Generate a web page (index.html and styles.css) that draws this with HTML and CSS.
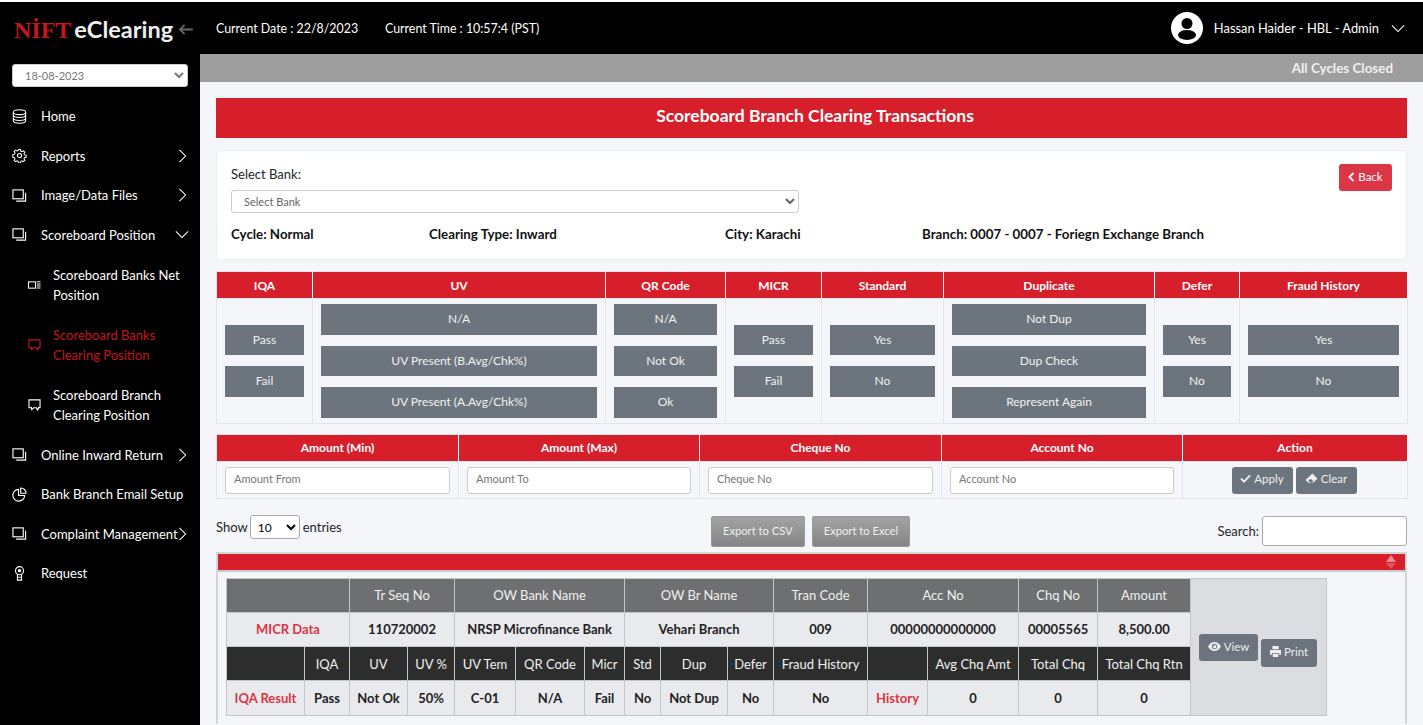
FILE: index.html
```html
<!DOCTYPE html>
<html lang="en">
<head>
  <meta charset="UTF-8" />
  <meta name="viewport" content="width=device-width, initial-scale=1.0"/>
  <title>NIFT eClearing</title>
  <link rel="stylesheet" href="styles.css">
</head>
<body>
  <svg class="sprite" aria-hidden="true">
    <symbol id="i-db" viewBox="0 0 16 16"><g fill="none" stroke="currentColor" stroke-width="1.1"><ellipse cx="8" cy="3.4" rx="6.6" ry="2.6"/><path d="M1.4 3.4v9.2c0 1.5 3 2.6 6.6 2.6s6.6-1.1 6.6-2.6V3.4M1.4 6.5c0 1.5 3 2.6 6.6 2.6s6.6-1.1 6.6-2.6M1.4 9.6c0 1.5 3 2.6 6.6 2.6s6.6-1.1 6.6-2.6"/></g></symbol>
    <symbol id="i-gear" viewBox="0 0 16 16"><g fill="none" stroke="currentColor" stroke-width="1.2"><circle cx="8" cy="8" r="2.2"/><path d="M6.8 1h2.4l.4 2 1.4.6 1.7-1.1 1.7 1.7-1.1 1.7.6 1.4 2 .4v2.4l-2 .4-.6 1.4 1.1 1.7-1.7 1.7-1.7-1.1-1.4.6-.4 2H6.8l-.4-2-1.4-.6-1.7 1.1-1.7-1.7 1.1-1.7-.6-1.4-2-.4V6.800l2-.4.6-1.4-1.1-1.7 1.7-1.7 1.7 1.1 1.4-.6z" transform="translate(.8 .8) scale(.9)"/></g></symbol>
    <symbol id="i-screens" viewBox="0 0 16 16"><g fill="none" stroke="currentColor" stroke-width="1.2"><rect x="1" y="2" width="11" height="9.5"/><path d="M14.5 5v9H4.5"/></g></symbol>
    <symbol id="i-list" viewBox="0 0 14 10"><g fill="none" stroke="currentColor" stroke-width="1.1"><rect x=".6" y="1.6" width="7.5" height="6.8"/><path d="M9.5 1.6h4M9.5 3.8h4M9.5 6h4M9.5 8.2h4"/></g></symbol>
    <symbol id="i-chat" viewBox="0 0 14 13"><g fill="none" stroke="currentColor" stroke-width="1.2"><path d="M3.5 9.5H1V1h12v8.500h-2"/><path d="M3.5 8.500l.5 3 2-2h3l1.500 2.500 1-3.500"/></g></symbol>
    <symbol id="i-pie" viewBox="0 0 16 16"><g fill="none" stroke="currentColor" stroke-width="1.2"><path d="M7 2.500a6.300 6.300 0 1 0 6.500 6.500H7z"/><path d="M9.300 1v5.700H15A5.700 5.700 0 0 0 9.300 1z"/></g></symbol>
    <symbol id="i-award" viewBox="0 0 12 16"><g fill="none" stroke="currentColor" stroke-width="1.2"><circle cx="6" cy="5" r="4.300"/><path d="M3.800 9v6h4.400V9M3.800 12h4.400"/></g><circle cx="6" cy="5" r="1.900" fill="currentColor"/></symbol>
    <symbol id="i-right" viewBox="0 0 10 16"><path d="M1.500 1l7 7-7 7" fill="none" stroke="currentColor" stroke-width="1.2"/></symbol>
    <symbol id="i-down" viewBox="0 0 16 10"><path d="M1 1.500l7 7 7-7" fill="none" stroke="currentColor" stroke-width="1.2"/></symbol>
    <symbol id="i-left" viewBox="0 0 8 12"><path d="M6.500 1L1.500 6l5 5" fill="none" stroke="currentColor" stroke-width="2.2"/></symbol>
    <symbol id="i-arrow" viewBox="0 0 16 12"><path d="M16 6H2M7 1L2 6l5 5" fill="none" stroke="currentColor" stroke-width="2"/></symbol>
    <symbol id="i-check" viewBox="0 0 12 10"><path d="M1 5l3.500 3.500L11 1.500" fill="none" stroke="currentColor" stroke-width="2"/></symbol>
    <symbol id="i-eraser" viewBox="0 0 14 12"><path d="M8 .5L13.500 6 8.500 11H4L.5 7.500z" fill="currentColor"/><path d="M3.500 7.500l3-1 2.500 2.500-1 1.500H5z" fill="#6c757d"/></symbol>
    <symbol id="i-eye" viewBox="0 0 16 11"><path d="M8 0C4.500 0 1.500 2.200 0 5.500 1.500 8.800 4.500 11 8 11s6.500-2.200 8-5.500C14.500 2.200 11.500 0 8 0z" fill="currentColor"/><circle cx="8" cy="5.500" r="3.300" fill="#6c757d"/><path d="M8 3.200a2.300 2.300 0 1 1-2.200 1.700 1.200 1.200 0 0 0 1.700-1.600z" fill="currentColor"/></symbol>
    <symbol id="i-print" viewBox="0 0 14 14"><path d="M3 0h8v4H3zM0 5h14v6h-2.500V9h-9v2H0zM3.500 10h7v4h-7z" fill="currentColor"/></symbol>
    <symbol id="i-user" viewBox="0 0 32 32"><circle cx="16" cy="16" r="16" fill="#fff"/><circle cx="16" cy="11.500" r="5.500" fill="#000"/><ellipse cx="16" cy="23" rx="9" ry="5" fill="#000"/></symbol>
  </svg>

  <div class="topbar">
    <div class="brand">
      <span class="brand-nift">NİFT</span><span class="brand-name">eClearing</span>
      <svg class="brand-back"><use href="#i-arrow"/></svg>
    </div>
    <div class="top-date">Current Date : 22/8/2023</div>
    <div class="top-time">Current Time : 10:57:4 (PST)</div>
    <div class="top-user">
      <svg class="avatar"><use href="#i-user"/></svg>
      <span>Hassan Haider - HBL - Admin</span>
      <svg class="top-caret"><use href="#i-down"/></svg>
    </div>
  </div>

  <div class="shell">
    <nav class="sidebar">
      <select class="date-select"><option>18-08-2023</option></select>
      <ul class="menu">
        <li class="menu-item"><svg class="menu-icon"><use href="#i-db"/></svg><span>Home</span></li>
        <li class="menu-item"><svg class="menu-icon"><use href="#i-gear"/></svg><span>Reports</span><svg class="menu-arrow"><use href="#i-right"/></svg></li>
        <li class="menu-item"><svg class="menu-icon"><use href="#i-screens"/></svg><span>Image/Data Files</span><svg class="menu-arrow"><use href="#i-right"/></svg></li>
        <li class="menu-item"><svg class="menu-icon"><use href="#i-screens"/></svg><span>Scoreboard Position</span><svg class="menu-arrow-down"><use href="#i-down"/></svg></li>
        <li class="sub-item"><svg class="sub-icon"><use href="#i-list"/></svg><span>Scoreboard Banks Net Position</span></li>
        <li class="sub-item active"><svg class="sub-icon"><use href="#i-chat"/></svg><span>Scoreboard Banks Clearing Position</span></li>
        <li class="sub-item"><svg class="sub-icon"><use href="#i-chat"/></svg><span>Scoreboard Branch Clearing Position</span></li>
        <li class="menu-item"><svg class="menu-icon"><use href="#i-screens"/></svg><span>Online Inward Return</span><svg class="menu-arrow"><use href="#i-right"/></svg></li>
        <li class="menu-item"><svg class="menu-icon"><use href="#i-pie"/></svg><span>Bank Branch Email Setup</span></li>
        <li class="menu-item"><svg class="menu-icon"><use href="#i-screens"/></svg><span>Complaint Management</span><svg class="menu-arrow"><use href="#i-right"/></svg></li>
        <li class="menu-item"><svg class="menu-icon"><use href="#i-award"/></svg><span>Request</span></li>
      </ul>
    </nav>

    <main class="main">
      <div class="status-bar">All Cycles Closed</div>
      <div class="content">
        <h1 class="page-title">Scoreboard Branch Clearing Transactions</h1>

        <div class="card">
          <div class="bank-row">
            <div class="bank-field">
              <label class="bank-label">Select Bank:</label>
              <select class="bank-select"><option>Select Bank</option></select>
            </div>
            <button class="btn-back"><svg class="ico-back"><use href="#i-left"/></svg>Back</button>
          </div>
          <div class="info-row">
            <span>Cycle: Normal</span>
            <span>Clearing Type: Inward</span>
            <span>City: Karachi</span>
            <span>Branch: 0007 - 0007 - Foriegn Exchange Branch</span>
          </div>
        </div>

        <table class="filter-table">
          <colgroup><col class="c-iqa"><col class="c-uv"><col class="c-qr"><col class="c-micr"><col class="c-std"><col class="c-dup"><col class="c-defer"><col class="c-fraud"></colgroup>
          <thead>
            <tr><th>IQA</th><th>UV</th><th>QR Code</th><th>MICR</th><th>Standard</th><th>Duplicate</th><th>Defer</th><th>Fraud History</th></tr>
          </thead>
          <tbody>
            <tr>
              <td><div class="stack"><span class="chip">Pass</span><span class="chip">Fail</span></div></td>
              <td><div class="stack"><span class="chip">N/A</span><span class="chip">UV Present (B.Avg/Chk%)</span><span class="chip">UV Present (A.Avg/Chk%)</span></div></td>
              <td><div class="stack"><span class="chip">N/A</span><span class="chip">Not Ok</span><span class="chip">Ok</span></div></td>
              <td><div class="stack"><span class="chip">Pass</span><span class="chip">Fail</span></div></td>
              <td><div class="stack"><span class="chip">Yes</span><span class="chip">No</span></div></td>
              <td><div class="stack"><span class="chip">Not Dup</span><span class="chip">Dup Check</span><span class="chip">Represent Again</span></div></td>
              <td><div class="stack"><span class="chip">Yes</span><span class="chip">No</span></div></td>
              <td><div class="stack"><span class="chip">Yes</span><span class="chip">No</span></div></td>
            </tr>
          </tbody>
        </table>

        <table class="filter-table search-table">
          <colgroup><col class="c-amt"><col class="c-amt2"><col class="c-amt"><col class="c-amt2"><col class="c-act"></colgroup>
          <thead>
            <tr><th>Amount (Min)</th><th>Amount (Max)</th><th>Cheque No</th><th>Account No</th><th>Action</th></tr>
          </thead>
          <tbody>
            <tr>
              <td><input class="field" placeholder="Amount From"></td>
              <td><input class="field" placeholder="Amount To"></td>
              <td><input class="field" placeholder="Cheque No"></td>
              <td><input class="field" placeholder="Account No"></td>
              <td>
                <div class="actions">
                  <button class="btn-gray"><svg class="ico-check"><use href="#i-check"/></svg>Apply</button>
                  <button class="btn-gray"><svg class="ico-eraser"><use href="#i-eraser"/></svg>Clear</button>
                </div>
              </td>
            </tr>
          </tbody>
        </table>

        <div class="controls">
          <div class="length">Show <select class="length-select"><option>10</option></select> entries</div>
          <div class="exports">
            <button class="btn-export">Export to CSV</button>
            <button class="btn-export">Export to Excel</button>
          </div>
          <div class="search">Search: <input class="search-input"></div>
        </div>

        <div class="result-box">
          <div class="result-head"><span class="sort-up"></span><span class="sort-down"></span></div>
          <div class="result-body">
            <table class="result-table">
              <colgroup><col class="r1"><col class="r2"><col class="r3"><col class="r4"><col class="r5"><col class="r6"><col class="r7"><col class="r8"><col class="r9"><col class="r10"><col class="r11"><col class="r12"><col class="r13"><col class="r14"><col class="r15"><col class="r16"></colgroup>
              <tr class="row-gray">
                <th colspan="2"></th><th colspan="2">Tr Seq No</th><th colspan="3">OW Bank Name</th><th colspan="3">OW Br Name</th><th>Tran Code</th><th colspan="2">Acc No</th><th>Chq No</th><th>Amount</th>
                <td rowspan="4" class="row-actions">
                  <div class="row-btns">
                    <button class="btn-view"><svg class="ico-eye"><use href="#i-eye"/></svg>View</button>
                    <button class="btn-print"><svg class="ico-print"><use href="#i-print"/></svg>Print</button>
                  </div>
                </td>
              </tr>
              <tr>
                <td colspan="2" class="cell-red">MICR Data</td><td colspan="2">110720002</td><td colspan="3">NRSP Microfinance Bank</td><td colspan="3">Vehari Branch</td><td>009</td><td colspan="2">00000000000000</td><td>00005565</td><td>8,500.00</td>
              </tr>
              <tr class="row-dark">
                <th></th><th>IQA</th><th>UV</th><th>UV %</th><th>UV Tem</th><th>QR Code</th><th>Micr</th><th>Std</th><th>Dup</th><th>Defer</th><th>Fraud History</th><th></th><th>Avg Chq Amt</th><th>Total Chq</th><th>Total Chq Rtn</th>
              </tr>
              <tr>
                <td class="cell-red">IQA Result</td><td>Pass</td><td>Not Ok</td><td>50%</td><td>C-01</td><td>N/A</td><td>Fail</td><td>No</td><td>Not Dup</td><td>No</td><td>No</td><td class="cell-red">History</td><td>0</td><td>0</td><td>0</td>
              </tr>
            </table>
          </div>
        </div>
      </div>
    </main>
  </div>
</body>
</html>
```

FILE: styles.css
```css
* {
  box-sizing: border-box;
}

html, body {
  height: 100%;
}

body {
  margin: 0;
  padding-top: 2px;
  background: #fff;
  overflow: hidden;
  font-family: "Lato", "Liberation Sans", sans-serif;
  font-size: 13px;
  color: #212529;
}

button, input, select {
  font-family: inherit;
}

.sprite {
  display: none;
}

/* top bar */
.topbar {
  display: flex;
  align-items: center;
  height: 52px;
  background: #000;
  color: #fff;
}

.brand {
  display: flex;
  align-items: baseline;
  width: 216px;
  padding-left: 14px;
  padding-top: 2px;
}

.brand-nift {
  font-family: "Liberation Serif", serif;
  font-weight: bold;
  font-size: 24px;
  color: #c4161c;
}

.brand-name {
  margin-left: 3px;
  font-size: 23.5px;
  font-weight: bold;
  color: #eee;
}

.brand-back {
  align-self: center;
  width: 15px;
  height: 11px;
  margin-left: 5px;
  color: #666;
}

.top-date, .top-time {
  font-size: 12.4px;
}

.top-date {
  width: 169px;
}

.top-user {
  display: flex;
  align-items: center;
  margin-left: auto;
  padding-right: 18px;
  font-size: 12.9px;
}

.avatar {
  width: 32px;
  height: 32px;
  margin-right: 11px;
}

.top-caret {
  width: 14px;
  height: 9px;
  margin-left: 12px;
}

/* sidebar */
.shell {
  display: flex;
  height: calc(100% - 52px);
}

.sidebar {
  flex: 0 0 200px;
  padding: 10px 12px 0;
  background: #000;
  color: #fff;
}

.date-select {
  display: block;
  width: 176px;
  height: 23px;
  padding-left: 8px;
  border: 1px solid #ccc;
  border-radius: 3px;
  background: #fff;
  font-size: 11px;
  color: #777;
}

.menu {
  list-style: none;
  margin: 9.4px 0 0;
  padding: 0;
}

.menu-item {
  display: flex;
  align-items: center;
  height: 39.6px;
}

.menu-icon {
  flex: none;
  width: 15px;
  height: 15px;
  margin-right: 14px;
}

.menu-arrow {
  width: 9px;
  height: 14px;
  margin-left: auto;
  margin-right: 1px;
}

.menu-arrow-down {
  width: 14px;
  height: 9px;
  margin-left: auto;
  margin-right: -1px;
}

.sub-item {
  display: flex;
  align-items: center;
  height: 60px;
  padding-left: 16px;
  padding-top: 1px;
  line-height: 20px;
}

.sub-item.active {
  color: #c4161c;
}

.sub-icon {
  flex: none;
  width: 13px;
  height: 12px;
  margin-right: 12px;
}

/* main area */
.main {
  flex: 1;
  min-width: 0;
  background: #f5f6fa;
}

.status-bar {
  height: 28px;
  padding-right: 30px;
  background: #9e9e9e;
  color: #f0f0f0;
  font-size: 13.4px;
  font-weight: bold;
  line-height: 28px;
  text-align: right;
}

.content {
  padding: 16px;
}

.page-title {
  margin: 0 0 12px;
  height: 40px;
  padding-left: 7px;
  background: #d71f2c;
  color: #fff;
  font-size: 17.5px;
  line-height: 36px;
  text-align: center;
}

.card {
  height: 110px;
  padding: 13px 14px 0;
  background: #fff;
  border: 1px solid #eceef2;
  border-radius: 3px;
  margin-bottom: 11px;
}

.bank-row {
  display: flex;
  justify-content: space-between;
}

.bank-field {
  width: 568px;
}

.bank-label {
  display: block;
  height: 20px;
  margin-bottom: 6px;
  line-height: 20px;
}

.bank-select {
  display: block;
  width: 100%;
  height: 23px;
  padding-left: 8px;
  border: 1px solid #ccc;
  border-radius: 3px;
  background: #fff;
  font-size: 11px;
  color: #666;
}

.btn-back {
  display: flex;
  align-items: center;
  justify-content: center;
  width: 53px;
  height: 27px;
  padding: 0 0 2px;
  border: none;
  border-radius: 3px;
  background: #dc3545;
  color: #fff;
  font-size: 11.5px;
}

.ico-back {
  width: 7px;
  height: 10px;
  margin-right: 3px;
}

.info-row {
  display: grid;
  grid-template-columns: 198px 296px 197px auto;
  margin-top: 11px;
  font-size: 13.3px;
  font-weight: bold;
  line-height: 20px;
  color: #111;
}

/* filter tables */
.filter-table {
  width: 1191px;
  margin-bottom: 10px;
  border-collapse: collapse;
  table-layout: fixed;
}

.filter-table th {
  height: 27px;
  padding: 0;
  border: 1px solid #e0e6ea;
  border-left-color: #fff;
  border-right-color: #fff;
  background: #d71f2c;
  color: #fff;
  font-size: 12px;
  font-weight: bold;
}

.filter-table th:first-child {
  border-left-color: #e0e6ea;
}

.filter-table td {
  height: 123px;
  padding: 5px 8px;
  border: 1px solid #e0e6ea;
}

.c-iqa { width: 96px; }
.c-uv { width: 293px; }
.c-qr { width: 120px; }
.c-micr { width: 96px; }
.c-std { width: 122px; }
.c-dup { width: 211px; }
.c-defer { width: 85px; }
.c-fraud { width: 168px; }

.stack {
  display: flex;
  flex-direction: column;
  justify-content: center;
  gap: 11px;
}

.chip {
  height: 30.5px;
  background: #6c757d;
  color: #f1f1f1;
  font-size: 12px;
  line-height: 29px;
  text-align: center;
}

.search-table {
  margin-bottom: 17px;
}

.search-table td {
  height: 37px;
  padding: 5px 8px 4px;
}

.c-amt { width: 242px; }
.c-amt2 { width: 241px; }
.c-act { width: 225px; }

.field {
  display: block;
  width: 100%;
  height: 27px;
  padding: 0 8px 3px;
  border: 1px solid #ccc;
  border-radius: 3px;
  background: #fff;
  font-size: 11px;
}

.field::placeholder {
  color: #777;
}

.actions {
  display: flex;
  justify-content: center;
  gap: 3px;
  padding-right: 2px;
}

.btn-gray {
  display: flex;
  align-items: center;
  justify-content: center;
  width: 61px;
  height: 27px;
  padding: 0 0 3px;
  border: none;
  border-radius: 3px;
  background: #6c757d;
  color: #eee;
  font-size: 11.5px;
}

.ico-check {
  width: 11px;
  height: 9px;
  margin-right: 3px;
}

.ico-eraser {
  width: 13px;
  height: 11px;
  margin-right: 3px;
}

/* datatable controls */
.controls {
  display: grid;
  grid-template-columns: 1fr auto 1fr;
  height: 31px;
  margin-bottom: 5px;
}

.length {
  display: flex;
  align-items: center;
  gap: 3px;
  height: 23px;
}

.length-select {
  width: 50px;
  height: 24px;
  margin-left: -1px;
  padding-left: 3px;
  border: 1px solid #aaa;
  border-radius: 3px;
  background: #fff;
  font-size: 12px;
}

.exports {
  display: flex;
  gap: 7px;
  padding-right: 2px;
}

.btn-export {
  height: 31px;
  padding: 0 11px 1px;
  border: 1px solid #999;
  border-radius: 2px;
  background: linear-gradient(#a3a3a3, #858585);
  color: #eee;
  font-size: 11.2px;
}

.search {
  display: flex;
  align-items: center;
  justify-content: flex-end;
  gap: 3px;
  height: 30px;
}

.search-input {
  width: 145px;
  height: 30px;
  border: 1px solid #aaa;
  border-radius: 3px;
  background: #fff;
}

/* result box */
.result-box {
  position: relative;
  width: 1191px;
  border: 2px solid #d4d5d9;
  border-bottom: none;
}

.result-head {
  height: 16px;
  background: #d71f2c;
}

.sort-up, .sort-down {
  position: absolute;
  right: 9px;
  width: 0;
  height: 0;
  border-left: 5px solid transparent;
  border-right: 5px solid transparent;
}

.sort-up {
  top: 1px;
  border-bottom: 7px solid #f08a92;
}

.sort-down {
  top: 9px;
  border-top: 6px solid #e0525c;
}

.result-body {
  padding: 6px 8px 8px;
  border-top: 2px solid #c9cacd;
}

.result-table {
  width: 1100px;
  border-collapse: collapse;
  table-layout: fixed;
  font-size: 13px;
}

.result-table th, .result-table td {
  height: 34.25px;
  padding: 0;
  border: 1px solid #c4c5c8;
  text-align: center;
  white-space: nowrap;
}

.result-table td {
  background: #e9eaee;
  color: #222;
  font-weight: bold;
}

.result-table th {
  font-weight: normal;
  color: #f0f0f0;
}

.row-gray th {
  background: #6e6f71;
}

.row-dark th {
  background: #2d2d2d;
}

.result-table .cell-red {
  color: #dc3545;
}

.result-table .row-actions {
  background: #dcdde1;
}

.r1 { width: 78px; }
.r2 { width: 45px; }
.r3 { width: 58px; }
.r4 { width: 47px; }
.r5 { width: 61px; }
.r6 { width: 69px; }
.r7 { width: 40px; }
.r8 { width: 36px; }
.r9 { width: 67px; }
.r10 { width: 46px; }
.r11 { width: 94px; }
.r12 { width: 60px; }
.r13 { width: 91px; }
.r14 { width: 79px; }
.r15 { width: 93px; }
.r16 { width: 136px; }

.row-btns {
  display: flex;
  align-items: flex-start;
  gap: 3px;
  padding: 7px 0 0 8px;
}

.btn-view, .btn-print {
  display: flex;
  align-items: center;
  justify-content: center;
  padding: 0 0 2px;
  border: none;
  border-radius: 3px;
  background: #6c757d;
  color: #eee;
  font-size: 11.5px;
}

.btn-view {
  width: 59px;
  height: 27px;
}

.btn-print {
  width: 56px;
  height: 28px;
  margin-top: 5px;
}

.ico-eye {
  width: 13px;
  height: 9px;
  margin-right: 3px;
}

.ico-print {
  width: 11px;
  height: 11px;
  margin-right: 3px;
}
```
